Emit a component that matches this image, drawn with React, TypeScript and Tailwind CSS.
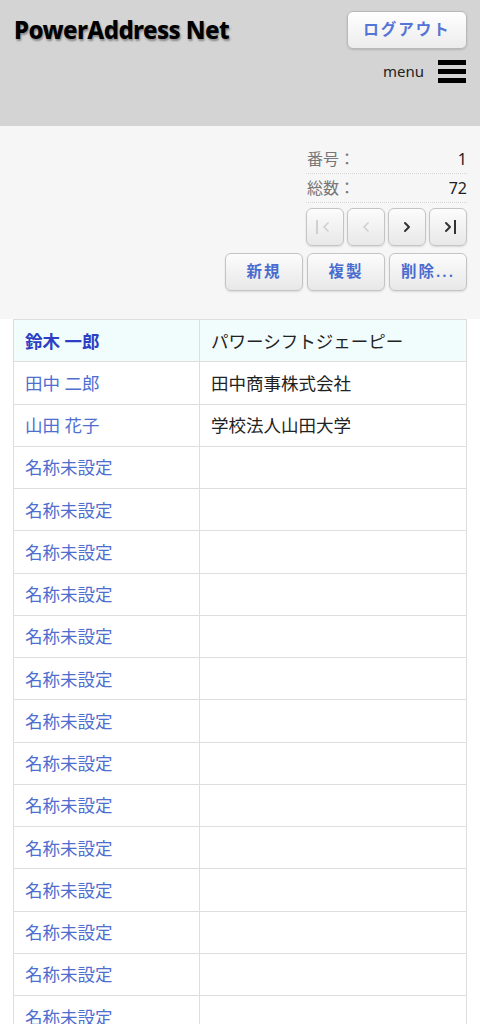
import { ChevronLeft, ChevronRight } from 'lucide-react'

const rows: { name: string; company: string }[] = [
    { name: '鈴木 一郎', company: 'パワーシフトジェーピー' },
    { name: '田中 二郎', company: '田中商事株式会社' },
    { name: '山田 花子', company: '学校法人山田大学' },
    ...Array.from({ length: 16 }, () => ({ name: '名称未設定', company: '' })),
]

const font = { fontFamily: '"Noto Sans", "Noto Sans CJK JP", sans-serif' }

function NavButton({ disabled, children }: { disabled?: boolean; children: React.ReactNode }) {
    return (
        <button
            className={`flex h-[38px] w-[38px] items-center justify-center rounded-[6px] border border-[#c4c4c4] bg-gradient-to-b from-[#fcfcfc] to-[#e8e8e8] shadow-[0_1px_2px_rgba(0,0,0,0.12)] ${disabled ? 'text-[#d0d0d0]' : 'text-[#333]'}`}
        >
            {children}
        </button>
    )
}

function ActionButton({ label }: { label: string }) {
    return (
        <button className="flex h-[38px] w-[78px] items-center justify-center rounded-[6px] border border-[#c4c4c4] bg-gradient-to-b from-[#fcfcfc] to-[#e8e8e8] text-[15.5px] font-semibold tracking-[2px] text-[#4a6ccf] shadow-[0_1px_2px_rgba(0,0,0,0.12)]">
            {label}
        </button>
    )
}

export default function App() {
    return (
        <div className="min-h-[1024px] bg-white" style={font}>
            <header className="flex h-[126px] justify-between bg-[#d4d4d4] pl-[14px] pr-[13px] pt-[11px]">
                <h1 className="mt-[2px] text-[24px] font-extrabold leading-[34px] tracking-[-0.6px] text-black [text-shadow:1px_2px_2px_rgba(0,0,0,0.35)]">
                    PowerAddress Net
                </h1>
                <div className="flex flex-col items-end">
                    <button className="h-[38px] w-[120px] rounded-[6px] border border-[#b8b8b8] bg-gradient-to-b from-[#ffffff] to-[#ececec] text-[15.5px] font-semibold tracking-[2px] text-[#5575d6] shadow-[0_1px_2px_rgba(0,0,0,0.15)]">
                        ログアウト
                    </button>
                    <div className="mt-[11px] flex items-center gap-[14px] pr-[1px]">
                        <span className="text-[15px] text-[#222]">menu</span>
                        <div className="flex w-[28px] flex-col gap-[4px]">
                            <span className="h-[5px] bg-black" />
                            <span className="h-[5px] bg-black" />
                            <span className="h-[5px] bg-black" />
                        </div>
                    </div>
                </div>
            </header>

            <section className="flex h-[193px] flex-col items-end bg-[#f6f6f6] pr-[13px] pt-[19px]">
                <div className="w-[161px] text-[16px]">
                    <div className="flex h-[29px] items-center justify-between border-b border-dotted border-[#d6d6d6] pl-[1px]">
                        <span className="text-[#777]">番号：</span>
                        <span className="text-[#222]">1</span>
                    </div>
                    <div className="flex h-[29px] items-center justify-between border-b border-dotted border-[#d6d6d6] pl-[1px]">
                        <span className="text-[#777]">総数：</span>
                        <span className="text-[#222]">72</span>
                    </div>
                </div>
                <div className="mt-[5px] flex gap-[3px]">
                    <NavButton disabled>
                        <span className="flex items-center">
                            <span className="h-[14px] w-[2px] bg-[#d0d0d0]" />
                            <ChevronLeft size={16} strokeWidth={2.5} />
                        </span>
                    </NavButton>
                    <NavButton disabled>
                        <ChevronLeft size={16} strokeWidth={2.5} />
                    </NavButton>
                    <NavButton>
                        <ChevronRight size={16} strokeWidth={3} />
                    </NavButton>
                    <NavButton>
                        <span className="flex items-center">
                            <ChevronRight size={16} strokeWidth={3} />
                            <span className="-ml-[2px] h-[14px] w-[2.5px] bg-[#333]" />
                        </span>
                    </NavButton>
                </div>
                <div className="mt-[7px] flex gap-[4px]">
                    <ActionButton label="新規" />
                    <ActionButton label="複製" />
                    <ActionButton label="削除..." />
                </div>
            </section>

            <div className="px-[13px]">
                <table className="w-full border-collapse text-[17.5px]">
                    <tbody>
                        {rows.map((r, i) => (
                            <tr key={i} className={i === 0 ? 'bg-[#f1fcfd]' : 'bg-white'}>
                                <td
                                    className={`h-[42.25px] w-[186px] border border-[#dedede] pl-[11px] ${i === 0 ? 'font-semibold text-[#2c3fc4]' : 'text-[#4e6ed0]'}`}
                                >
                                    {r.name}
                                </td>
                                <td className="border border-[#dedede] pl-[11px] text-[#222]">{r.company}</td>
                            </tr>
                        ))}
                    </tbody>
                </table>
            </div>
        </div>
    )
}
